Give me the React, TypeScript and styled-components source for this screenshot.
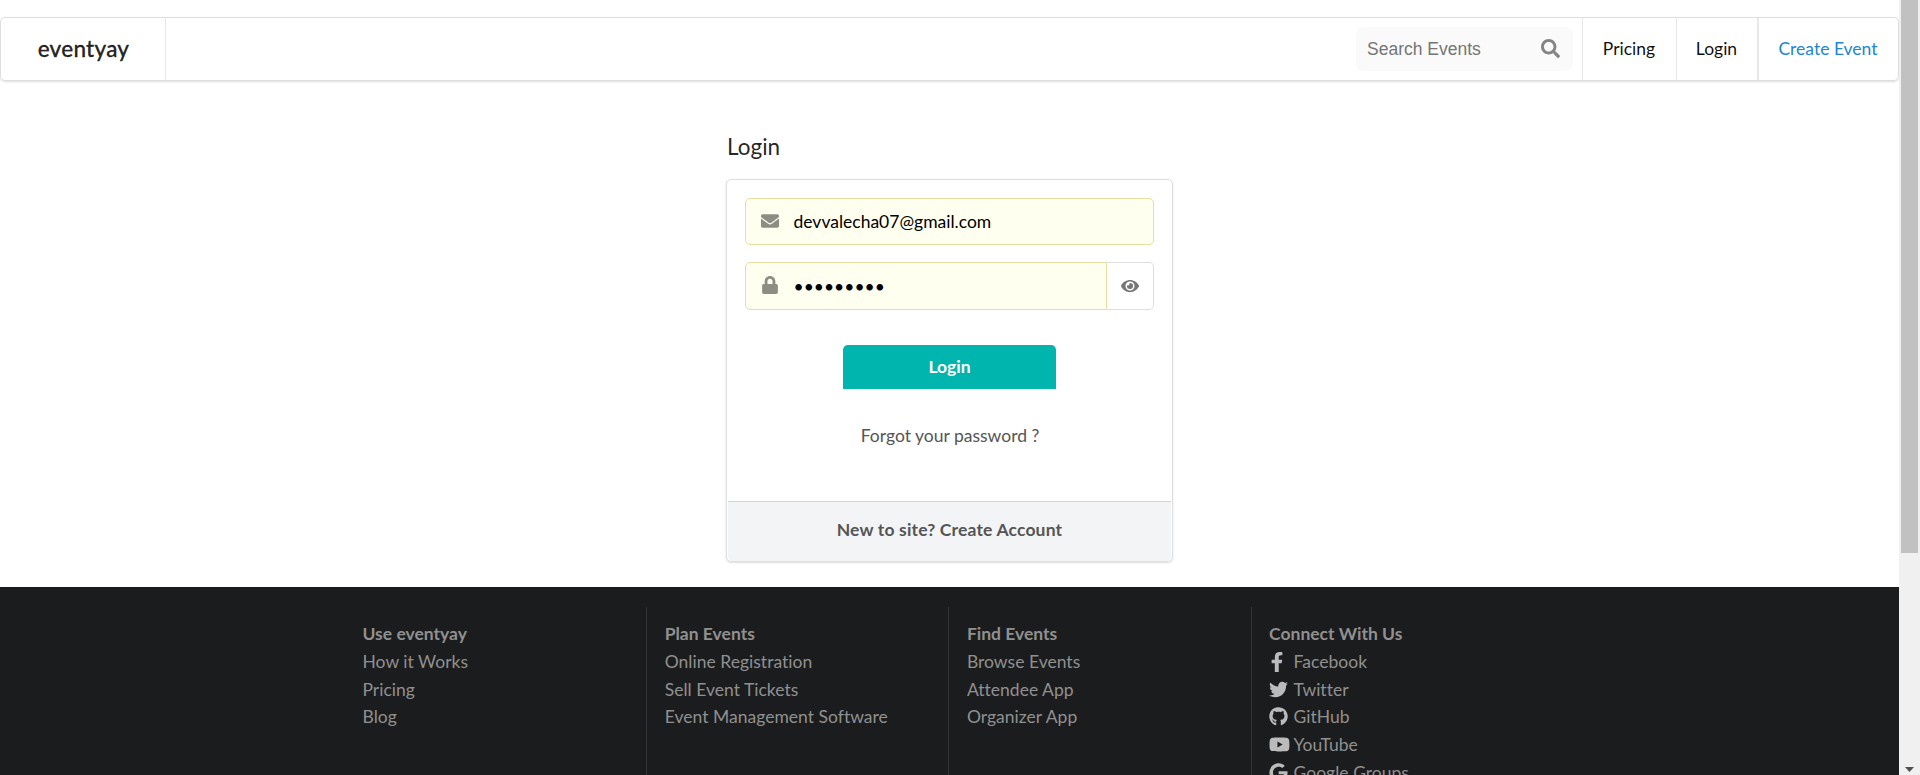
import React from 'react';
import styled, { createGlobalStyle } from 'styled-components';
import {
  FaSearch, FaEnvelope, FaLock, FaEye, FaFacebookF, FaTwitter, FaGithub, FaYoutube, FaGoogle,
} from 'react-icons/fa';

const GlobalStyle = createGlobalStyle`
  *, *::before, *::after { box-sizing: border-box; }
  html, body { margin: 0; padding: 0; overflow: hidden; }
  body {
    font-family: Lato, 'Liberation Sans', sans-serif;
    font-size: 17.5px;
    line-height: 25px;
    color: rgba(0, 0, 0, 0.87);
    background: #fff;
  }
  input, button { font-family: inherit; font-size: inherit; }
  a { color: inherit; text-decoration: none; }
`;

const Window = styled.div`
  display: flex;
  height: 775px;
  overflow: hidden;
`;

const Page = styled.div`
  width: 1899px;
  height: 775px;
  display: flex;
  flex-direction: column;
  overflow: hidden;
`;

const Navbar = styled.nav`
  display: flex;
  flex: none;
  height: 64px;
  margin-top: 17px;
  border: 1px solid #dedede;
  border-radius: 5px;
  box-shadow: 0 1px 2px rgba(34, 36, 38, 0.15);
`;

const Brand = styled.a`
  width: 165px;
  display: flex;
  align-items: center;
  justify-content: center;
  border-right: 1px solid #e8e8e8;
  font-size: 22.5px;
  font-weight: 500;
  letter-spacing: 0.25px;
  padding: 0 0 2px 1px;
  -webkit-text-stroke: 0.3px currentColor;
`;

const NavRight = styled.div`
  display: flex;
  align-items: center;
  margin-left: auto;
`;

const SearchBox = styled.label`
  display: flex;
  align-items: center;
  justify-content: space-between;
  width: 217px;
  height: 44px;
  margin-right: 9px;
  padding: 0 13px 2px 11px;
  border-radius: 8px;
  background: #fafafa;
  color: #858585;
`;

const SearchInput = styled.input`
  width: 150px;
  padding: 2px 0 0;
  border: 0;
  outline: 0;
  background: transparent;
  font-family: 'Liberation Sans', sans-serif;
  font-size: 17.5px;
  &::placeholder { color: #757575; opacity: 1; }
`;

const NavItem = styled.a<{ $width: number; $accent?: boolean }>`
  display: flex;
  align-items: center;
  justify-content: center;
  width: ${(p) => p.$width}px;
  height: 100%;
  padding: 0 1px 2px 0;
  border-left: ${(p) => (p.$accent ? 2 : 1)}px solid #e8e8e8;
  color: ${(p) => (p.$accent ? '#2185d0' : 'rgba(0, 0, 0, 0.95)')};
`;

const Main = styled.main`
  flex: none;
  width: 447px;
  height: 506px;
  margin: 0 auto;
  padding-top: 51px;
`;

const Title = styled.h1`
  margin: 0 0 18px;
  padding-left: 1px;
  font-size: 22.5px;
  line-height: 29px;
  font-weight: 400;
`;

const Card = styled.section`
  display: flex;
  flex-direction: column;
  height: 383px;
  border: 1px solid #dedede;
  border-radius: 5px;
  box-shadow: 0 1px 2px rgba(34, 36, 38, 0.15);
`;

const Form = styled.form`
  display: flex;
  flex: 1;
  flex-direction: column;
  align-items: center;
  padding: 18px 18px 0;
`;

const Field = styled.div<{ $height: number }>`
  display: flex;
  width: 100%;
  height: ${(p) => p.$height}px;
  margin-bottom: 17px;
`;

const InputShell = styled.label<{ $joined?: boolean }>`
  display: flex;
  flex: 1;
  align-items: center;
  border: 1px solid #e5dfa1;
  border-radius: ${(p) => (p.$joined ? '5px 0 0 5px' : '5px')};
  background: #fffff0;
  color: #8d8d84;
`;

const IconSlot = styled.span`
  display: flex;
  justify-content: center;
  width: 47.5px;
  padding-bottom: 2px;
`;

const TextInput = styled.input`
  flex: 1;
  min-width: 0;
  padding: 0;
  border: 0;
  outline: 0;
  background: transparent;
  color: #000;
`;

const RevealButton = styled.button`
  display: flex;
  align-items: center;
  justify-content: center;
  width: 47px;
  padding: 0;
  border: 1px solid #dedede;
  border-left: 0;
  border-radius: 0 5px 5px 0;
  background: #fff;
  color: #767676;
`;

const SubmitButton = styled.button`
  width: 213px;
  height: 44px;
  margin-top: 18px;
  padding: 0 0 2px;
  border: 0;
  border-radius: 5px 5px 0 0;
  background: #00b5ad;
  color: #fff;
  font-weight: 700;
`;

const ForgotLink = styled.a`
  margin-top: 34px;
  padding-left: 1px;
  color: #555;
`;

const SignUp = styled.a`
  display: flex;
  justify-content: center;
  height: 60px;
  margin: 0 1px;
  padding-top: 15px;
  border-top: 1px solid #d4d4d5;
  border-radius: 0 0 4px 4px;
  background: #f3f4f5;
  color: #555;
  font-weight: 700;
  letter-spacing: 0.17px;
`;

const Footer = styled.footer`
  display: flex;
  flex: 1;
  min-height: 0;
  padding: 20px 0 0 345px;
  background: #1b1c1d;
  color: #909090;
`;

const FooterColumn = styled.div`
  flex: none;
  width: 302.2px;
  height: 220px;
  padding: 13.4px 0 0 17.5px;
  border-right: 1px solid #333435;
  &:last-child { border-right: 0; }
`;

const FooterHeading = styled.h4`
  margin: 0;
  font-size: 17.5px;
  line-height: 27.6px;
  font-weight: 700;
`;

const FooterLink = styled.a`
  display: flex;
  align-items: center;
  height: 27.6px;
  white-space: nowrap;
  letter-spacing: 0.02px;
`;

const SocialIcon = styled.span`
  display: flex;
  justify-content: flex-start;
  width: 24.5px;
  color: #bbb;
`;

const FacebookMark = styled(FaFacebookF)`
  margin-left: -2px;
`;

const Scrollbar = styled.div`
  display: flex;
  flex-direction: column;
  align-items: center;
  justify-content: space-between;
  width: 21px;
  padding-bottom: 3px;
  background: #f0f0f0;
`;

const Thumb = styled.div`
  width: 17px;
  height: 553px;
  background: #c1c1c1;
`;

const columns = [
  { title: 'Use eventyay', links: ['How it Works', 'Pricing', 'Blog'] },
  { title: 'Plan Events', links: ['Online Registration', 'Sell Event Tickets', 'Event Management Software'] },
  { title: 'Find Events', links: ['Browse Events', 'Attendee App', 'Organizer App'] },
];

const socials = [
  { label: 'Facebook', icon: <FacebookMark size={20} /> },
  { label: 'Twitter', icon: <FaTwitter size={19} /> },
  { label: 'GitHub', icon: <FaGithub size={19} /> },
  { label: 'YouTube', icon: <FaYoutube size={21} /> },
  { label: 'Google Groups', icon: <FaGoogle size={19} /> },
];

export default function App() {
  return (
    <Window>
      <GlobalStyle />
      <Page>
        <Navbar>
          <Brand>eventyay</Brand>
          <NavRight>
            <SearchBox>
              <SearchInput placeholder="Search Events" />
              <FaSearch size={19} />
            </SearchBox>
            <NavItem $width={94}>Pricing</NavItem>
            <NavItem $width={81}>Login</NavItem>
            <NavItem $width={141} $accent>Create Event</NavItem>
          </NavRight>
        </Navbar>
        <Main>
          <Title>Login</Title>
          <Card>
            <Form>
              <Field $height={47}>
                <InputShell>
                  <IconSlot><FaEnvelope size={18} /></IconSlot>
                  <TextInput type="text" defaultValue="devvalecha07@gmail.com" />
                </InputShell>
              </Field>
              <Field $height={48}>
                <InputShell $joined>
                  <IconSlot><FaLock size={18} /></IconSlot>
                  <TextInput type="password" defaultValue="123456789" />
                </InputShell>
                <RevealButton type="button"><FaEye size={18} /></RevealButton>
              </Field>
              <SubmitButton type="button">Login</SubmitButton>
              <ForgotLink>Forgot your password ?</ForgotLink>
            </Form>
            <SignUp>New to site? Create Account</SignUp>
          </Card>
        </Main>
        <Footer>
          {columns.map((column) => (
            <FooterColumn key={column.title}>
              <FooterHeading>{column.title}</FooterHeading>
              {column.links.map((link) => <FooterLink key={link}>{link}</FooterLink>)}
            </FooterColumn>
          ))}
          <FooterColumn>
            <FooterHeading>Connect With Us</FooterHeading>
            {socials.map((social) => (
              <FooterLink key={social.label}>
                <SocialIcon>{social.icon}</SocialIcon>
                {social.label}
              </FooterLink>
            ))}
          </FooterColumn>
        </Footer>
      </Page>
      <Scrollbar>
        <Thumb />
        <svg width="9" height="5" viewBox="0 0 9 5"><path d="M0 0h9L4.500 5z" fill="#505050" /></svg>
      </Scrollbar>
    </Window>
  );
}
